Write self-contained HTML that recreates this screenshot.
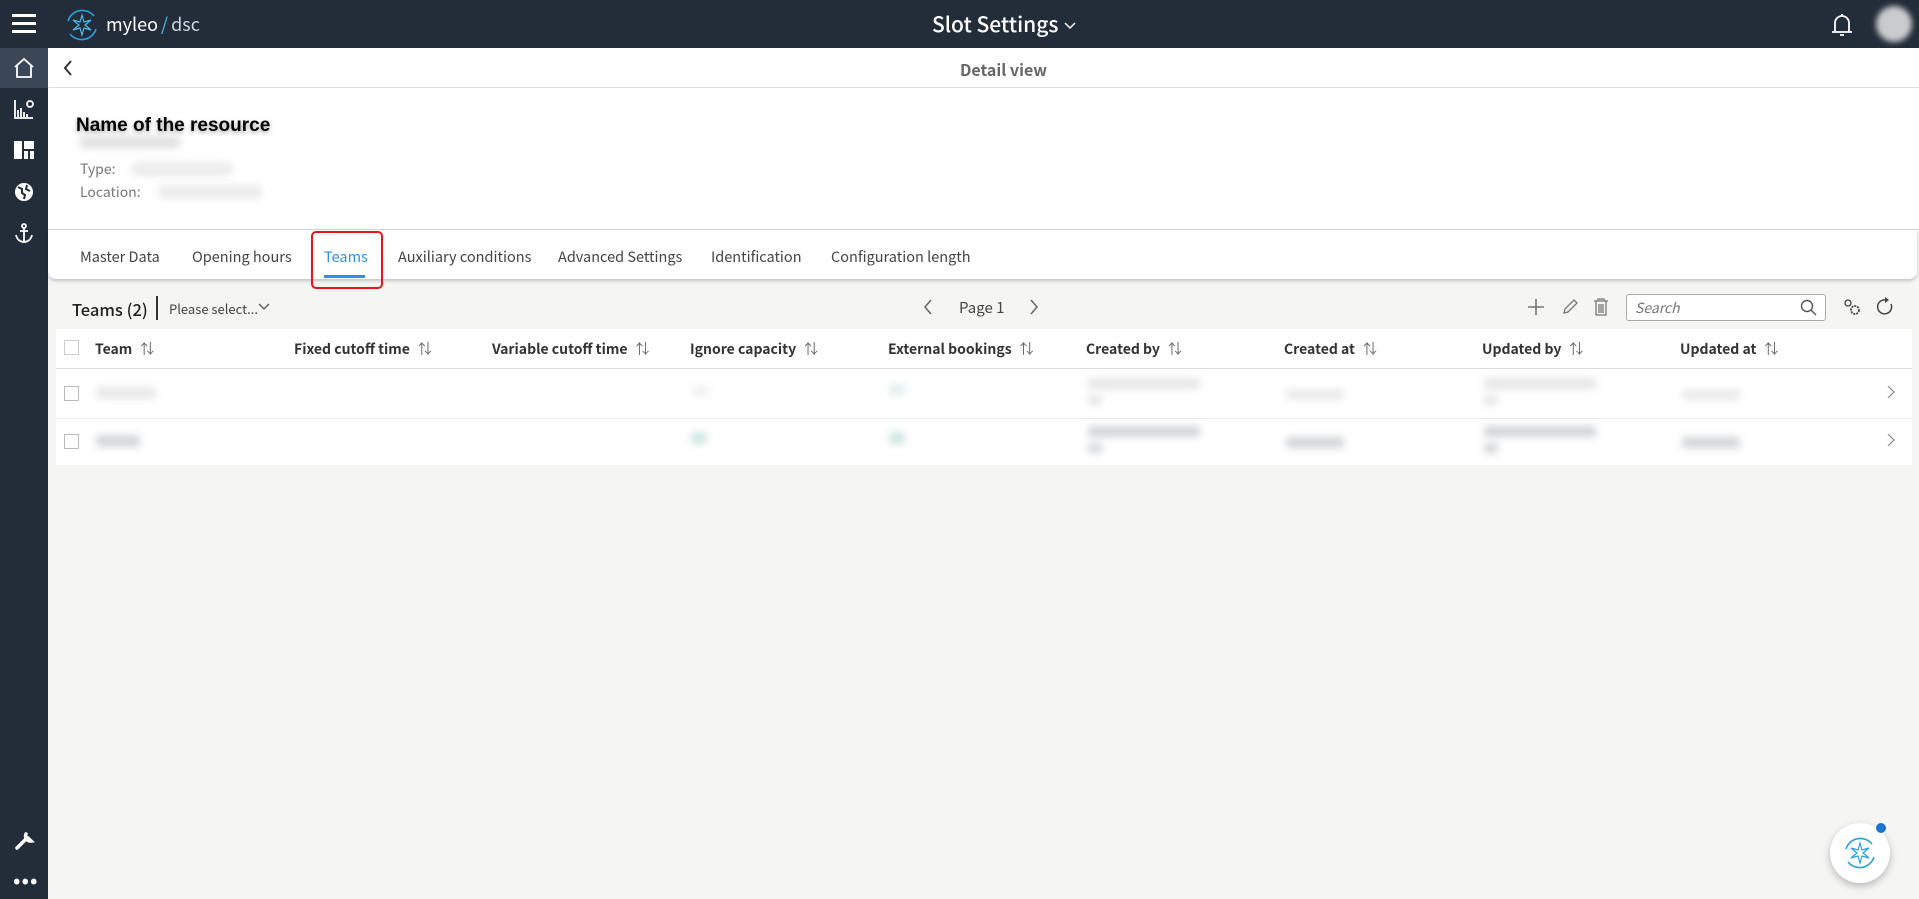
<!DOCTYPE html>
<html><head><meta charset="utf-8"><style>
*{box-sizing:border-box;margin:0;padding:0}
body{width:1919px;height:899px;overflow:hidden;background:#f5f5f4;font-family:"Noto Sans CJK JP","Liberation Sans",sans-serif;color:#333;position:relative}
.abs{position:absolute}
.top{left:0;top:0;width:1919px;height:48px;background:#232d39}
.side{left:0;top:48px;width:48px;height:851px;background:#232d39}
.blur{position:absolute;background:#cfd2d6;filter:blur(4px);border-radius:3px}
.th{position:absolute;top:339px;font-size:14px;font-weight:600;color:#333}
.th span{font-weight:400;color:#666;margin-left:8px}
.cb{position:absolute;left:64px;width:15px;height:15px;border:1.5px solid #bbb;background:#fff}
.tab{position:absolute;top:246px;font-size:14.5px;color:#444}
</style></head><body>
<div class="abs top"></div>
<div class="abs side"></div>
<div class="abs" style="left:12px;top:14px;width:24px;height:3px;background:#fff"></div>
<div class="abs" style="left:12px;top:22px;width:24px;height:3px;background:#fff"></div>
<div class="abs" style="left:12px;top:30px;width:24px;height:3px;background:#fff"></div>
<svg class="abs" style="left:64px;top:7px" width="36" height="36" viewBox="0 0 36 36"><path d="M30 9A15 15 0 0 0 4 14M6 27A15 15 0 0 0 32 22" stroke="#2aa0e0" stroke-width="1.6" fill="none"/><path d="M18 8L20 15 27 13 21 18 27 23 20 21 18 28 16 21 9 23 15 18 9 13 16 15Z" stroke="#4fb8ea" fill="none" stroke-width="1.2"/></svg>
<div class="abs" style="left:106px;top:11px;font-size:18px;color:#fff">myleo<span style="color:#4fb8ea;margin:0 3px">/</span><span style="color:#cfd6de">dsc</span></div>
<div class="abs" style="left:932px;top:9px;font-size:21px;color:#fff;font-weight:500">Slot Settings <svg width="14" height="10" viewBox="0 0 14 10" style="vertical-align:middle"><path d="M2 2l5 5 5-5" stroke="#fff" stroke-width="1.5" fill="none"/></svg></div>
<svg class="abs" style="left:1830px;top:12px" width="24" height="26" viewBox="0 0 24 26"><path d="M5 20V11a7 7 0 0 1 14 0v9M2 20h20M10 23h4M12 2v2" stroke="#fff" stroke-width="1.8" fill="none"/></svg>
<div class="abs" style="left:1876px;top:6px;width:36px;height:36px;border-radius:50%;background:#c9cbcd;filter:blur(3px)"></div>
<div class="abs" style="left:0;top:48px;width:48px;height:40px;background:#3b4656"></div>
<svg class="abs" style="left:12px;top:56px" width="24" height="24" viewBox="0 0 24 24"><path d="M3 11L12 3l9 8M5 9v12h14V9" stroke="#fff" stroke-width="1.8" fill="none"/></svg>
<svg class="abs" style="left:13px;top:98px" width="22" height="22" viewBox="0 0 22 22"><path d="M2 2v18h18M5 19v-7M8 19v-9M11 19v-5M14 19v-3" stroke="#fff" stroke-width="1.8" fill="none"/><circle cx="17" cy="6" r="3" stroke="#fff" stroke-width="1.8" fill="none"/></svg>
<svg class="abs" style="left:14px;top:141px" width="20" height="18" viewBox="0 0 20 18"><path d="M0 0h8v18H0zM10 0h10v8H10zM10 10h4v8h-4zM16 10h4v8h-4z" fill="#fff"/></svg>
<svg class="abs" style="left:13px;top:181px" width="22" height="22" viewBox="0 0 22 22"><circle cx="11" cy="11" r="9" fill="#fff"/><path d="M5 6l4 2 0 4 3 2-1 4M14 4l-1 4 4 2" stroke="#232d39" stroke-width="2" fill="none"/></svg>
<svg class="abs" style="left:13px;top:222px" width="22" height="22" viewBox="0 0 22 22"><circle cx="11" cy="4" r="2" stroke="#fff" stroke-width="1.8" fill="none"/><path d="M11 6v14M7 9h8M3 13c1 5 5 7 8 7s7-2 8-7" stroke="#fff" stroke-width="1.8" fill="none"/></svg>
<svg class="abs" style="left:13px;top:830px" width="22" height="22" viewBox="0 0 22 22"><path d="M4 18l8-8M13 4a5 5 0 0 0 5 7l-3-3" stroke="#fff" stroke-width="3.5" fill="none" stroke-linecap="round"/></svg>
<div class="abs" style="left:13px;top:872px;font-size:22px;color:#fff;letter-spacing:1px;line-height:14px">&#8226;&#8226;&#8226;</div>
<div class="abs" style="left:48px;top:48px;width:1871px;height:40px;background:#fff;border-bottom:1px solid #ddd"></div>
<svg class="abs" style="left:62px;top:60px" width="12" height="16" viewBox="0 0 12 16"><path d="M9 1L3 8l6 7" stroke="#333" stroke-width="2" fill="none"/></svg>
<div class="abs" style="left:960px;top:57px;font-size:16px;font-weight:600;color:#666">Detail view</div>
<div class="abs" style="left:48px;top:88px;width:1871px;height:142px;background:#fff;border-bottom:1px solid #d5d5d5"></div>
<div class="abs" style="left:76px;top:115px;font-family:'Liberation Sans',sans-serif;font-size:19px;font-weight:700;color:#000;text-shadow:0 2px 4px rgba(0,0,0,.35)">Name of the resource</div>
<div class="blur" style="left:80px;top:136px;width:100px;height:12px;background:#e0e0e0"></div>
<div class="abs" style="left:80px;top:159px;font-size:14px;color:#777">Type:</div>
<div class="blur" style="left:132px;top:162px;width:100px;height:14px;background:#ececec"></div>
<div class="abs" style="left:80px;top:182px;font-size:14px;color:#777">Location:</div>
<div class="blur" style="left:158px;top:185px;width:104px;height:14px;background:#ececec"></div>
<div class="abs" style="left:48px;top:230px;width:1869px;height:49px;background:#fff;border-radius:0 0 8px 8px;box-shadow:0 2px 3px rgba(0,0,0,.2)"></div>
<div class="tab" style="left:80px">Master Data</div>
<div class="tab" style="left:192px">Opening hours</div>
<div class="tab" style="left:324px;color:#2d8fe6">Teams</div>
<div class="abs" style="left:324px;top:275px;width:41px;height:3px;background:#2d8fe6"></div>
<div class="tab" style="left:398px">Auxiliary conditions</div>
<div class="tab" style="left:558px">Advanced Settings</div>
<div class="tab" style="left:711px">Identification</div>
<div class="tab" style="left:831px">Configuration length</div>
<div class="abs" style="left:311px;top:231px;width:72px;height:58px;border:2px solid #e8131b;border-radius:5px"></div>
<div class="abs" style="left:72px;top:297px;font-size:16.5px;font-weight:500;color:#222">Teams (2)</div>
<div class="abs" style="left:156px;top:296px;width:2px;height:24px;background:#333"></div>
<div class="abs" style="left:169px;top:299px;font-size:13px;color:#444">Please select...</div>
<svg class="abs" style="left:258px;top:303px" width="12" height="8" viewBox="0 0 12 8"><path d="M1 1l5 5 5-5" stroke="#555" stroke-width="1.3" fill="none"/></svg>
<svg class="abs" style="left:923px;top:299px" width="10" height="16" viewBox="0 0 10 16"><path d="M8 1L2 8l6 7" stroke="#666" stroke-width="1.5" fill="none"/></svg>
<div class="abs" style="left:959px;top:297px;font-size:15px;color:#444">Page 1</div>
<svg class="abs" style="left:1029px;top:299px" width="10" height="16" viewBox="0 0 10 16"><path d="M2 1l6 7-6 7" stroke="#666" stroke-width="1.5" fill="none"/></svg>
<svg class="abs" style="left:1527px;top:298px" width="18" height="18" viewBox="0 0 18 18"><path d="M9 1v16M1 9h16" stroke="#777" stroke-width="1.6"/></svg>
<svg class="abs" style="left:1561px;top:298px" width="18" height="18" viewBox="0 0 18 18"><path d="M3 15l1-4 9-9 3 3-9 9z" stroke="#777" stroke-width="1.3" fill="none"/></svg>
<svg class="abs" style="left:1593px;top:297px" width="16" height="19" viewBox="0 0 16 19"><path d="M1 4h14M5 4V2h6v2M3 4v14h10V4M6 7v9M8 7v9M10 7v9" stroke="#777" stroke-width="1.3" fill="none"/></svg>
<div class="abs" style="left:1626px;top:294px;width:200px;height:27px;border:1px solid #aaa;border-radius:3px;background:#fff"></div>
<div class="abs" style="left:1635px;top:298px;font-size:14px;font-style:italic;color:#777">Search</div>
<svg class="abs" style="left:1800px;top:299px" width="18" height="18" viewBox="0 0 18 18"><circle cx="7" cy="7" r="5.5" stroke="#555" stroke-width="1.4" fill="none"/><path d="M11 11l5 5" stroke="#555" stroke-width="1.4"/></svg>
<svg class="abs" style="left:1843px;top:298px" width="18" height="18" viewBox="0 0 18 18"><circle cx="5" cy="5" r="3" stroke="#444" stroke-width="1.3" fill="none"/><circle cx="12" cy="12" r="4" stroke="#444" stroke-width="1.8" fill="none" stroke-dasharray="2 1"/></svg>
<svg class="abs" style="left:1876px;top:297px" width="18" height="18" viewBox="0 0 18 18"><path d="M10 3A7 7 0 1 0 15 7" stroke="#444" stroke-width="1.5" fill="none"/><path d="M9 0l4 3-4 3z" fill="#444"/></svg>
<div class="abs" style="left:56px;top:329px;width:1856px;height:136px;background:#fff"></div>
<div class="abs" style="left:56px;top:368px;width:1856px;height:1px;background:#ddd"></div>
<div class="abs" style="left:56px;top:418px;width:1856px;height:1px;background:#eee"></div>
<div class="cb" style="top:340px;border-color:#ccc"></div>
<div class="cb" style="top:386px"></div>
<div class="cb" style="top:434px"></div>
<div class="th" style="left:95px">Team<span>&#8645;</span></div>
<div class="th" style="left:294px">Fixed cutoff time<span>&#8645;</span></div>
<div class="th" style="left:492px">Variable cutoff time<span>&#8645;</span></div>
<div class="th" style="left:690px">Ignore capacity<span>&#8645;</span></div>
<div class="th" style="left:888px">External bookings<span>&#8645;</span></div>
<div class="th" style="left:1086px">Created by<span>&#8645;</span></div>
<div class="th" style="left:1284px">Created at<span>&#8645;</span></div>
<div class="th" style="left:1482px">Updated by<span>&#8645;</span></div>
<div class="th" style="left:1680px">Updated at<span>&#8645;</span></div>
<div class="blur" style="left:96px;top:387px;width:60px;height:12px;background:#e8e8e8"></div>
<div class="blur" style="left:96px;top:435px;width:44px;height:12px;background:#d4d6d9"></div>
<div class="blur" style="left:693px;top:386px;width:16px;height:10px;background:#f0f0f0"></div>
<div class="blur" style="left:889px;top:384px;width:16px;height:12px;background:#e2f0ee"></div>
<div class="blur" style="left:691px;top:432px;width:16px;height:12px;background:#cfe6e1"></div>
<div class="blur" style="left:889px;top:432px;width:16px;height:12px;background:#cfe6e1"></div>
<div class="blur" style="left:1088px;top:378px;width:112px;height:11px;background:#e6e6e6"></div>
<div class="blur" style="left:1088px;top:395px;width:14px;height:10px;background:#e6e6e6"></div>
<div class="blur" style="left:1088px;top:426px;width:112px;height:11px;background:#d2d4d7"></div>
<div class="blur" style="left:1088px;top:443px;width:14px;height:10px;background:#d2d4d7"></div>
<div class="blur" style="left:1286px;top:389px;width:58px;height:11px;background:#eaeaea"></div>
<div class="blur" style="left:1286px;top:437px;width:58px;height:11px;background:#d2d4d7"></div>
<div class="blur" style="left:1484px;top:378px;width:112px;height:11px;background:#e6e6e6"></div>
<div class="blur" style="left:1484px;top:395px;width:14px;height:10px;background:#e6e6e6"></div>
<div class="blur" style="left:1484px;top:426px;width:112px;height:11px;background:#d2d4d7"></div>
<div class="blur" style="left:1484px;top:443px;width:14px;height:10px;background:#d2d4d7"></div>
<div class="blur" style="left:1682px;top:389px;width:58px;height:11px;background:#eaeaea"></div>
<div class="blur" style="left:1682px;top:437px;width:58px;height:11px;background:#d2d4d7"></div>
<svg class="abs" style="left:1887px;top:385px" width="8" height="14" viewBox="0 0 8 14"><path d="M1 1l6 6-6 6" stroke="#888" stroke-width="1.2" fill="none"/></svg>
<svg class="abs" style="left:1887px;top:433px" width="8" height="14" viewBox="0 0 8 14"><path d="M1 1l6 6-6 6" stroke="#888" stroke-width="1.2" fill="none"/></svg>
<div class="abs" style="left:1830px;top:823px;width:60px;height:60px;border-radius:50%;background:#fff;box-shadow:0 3px 8px rgba(0,0,0,.25)"></div>
<svg class="abs" style="left:1842px;top:835px" width="36" height="36" viewBox="0 0 36 36"><path d="M30 9A15 15 0 0 0 4 14M6 27A15 15 0 0 0 32 22" stroke="#2aa0e0" stroke-width="1.6" fill="none"/><path d="M18 8L20 15 27 13 21 18 27 23 20 21 18 28 16 21 9 23 15 18 9 13 16 15Z" stroke="#2aa0e0" fill="none" stroke-width="1.2"/></svg>
<div class="abs" style="left:1876px;top:823px;width:10px;height:10px;border-radius:50%;background:#1b73d0"></div>
</body></html>
